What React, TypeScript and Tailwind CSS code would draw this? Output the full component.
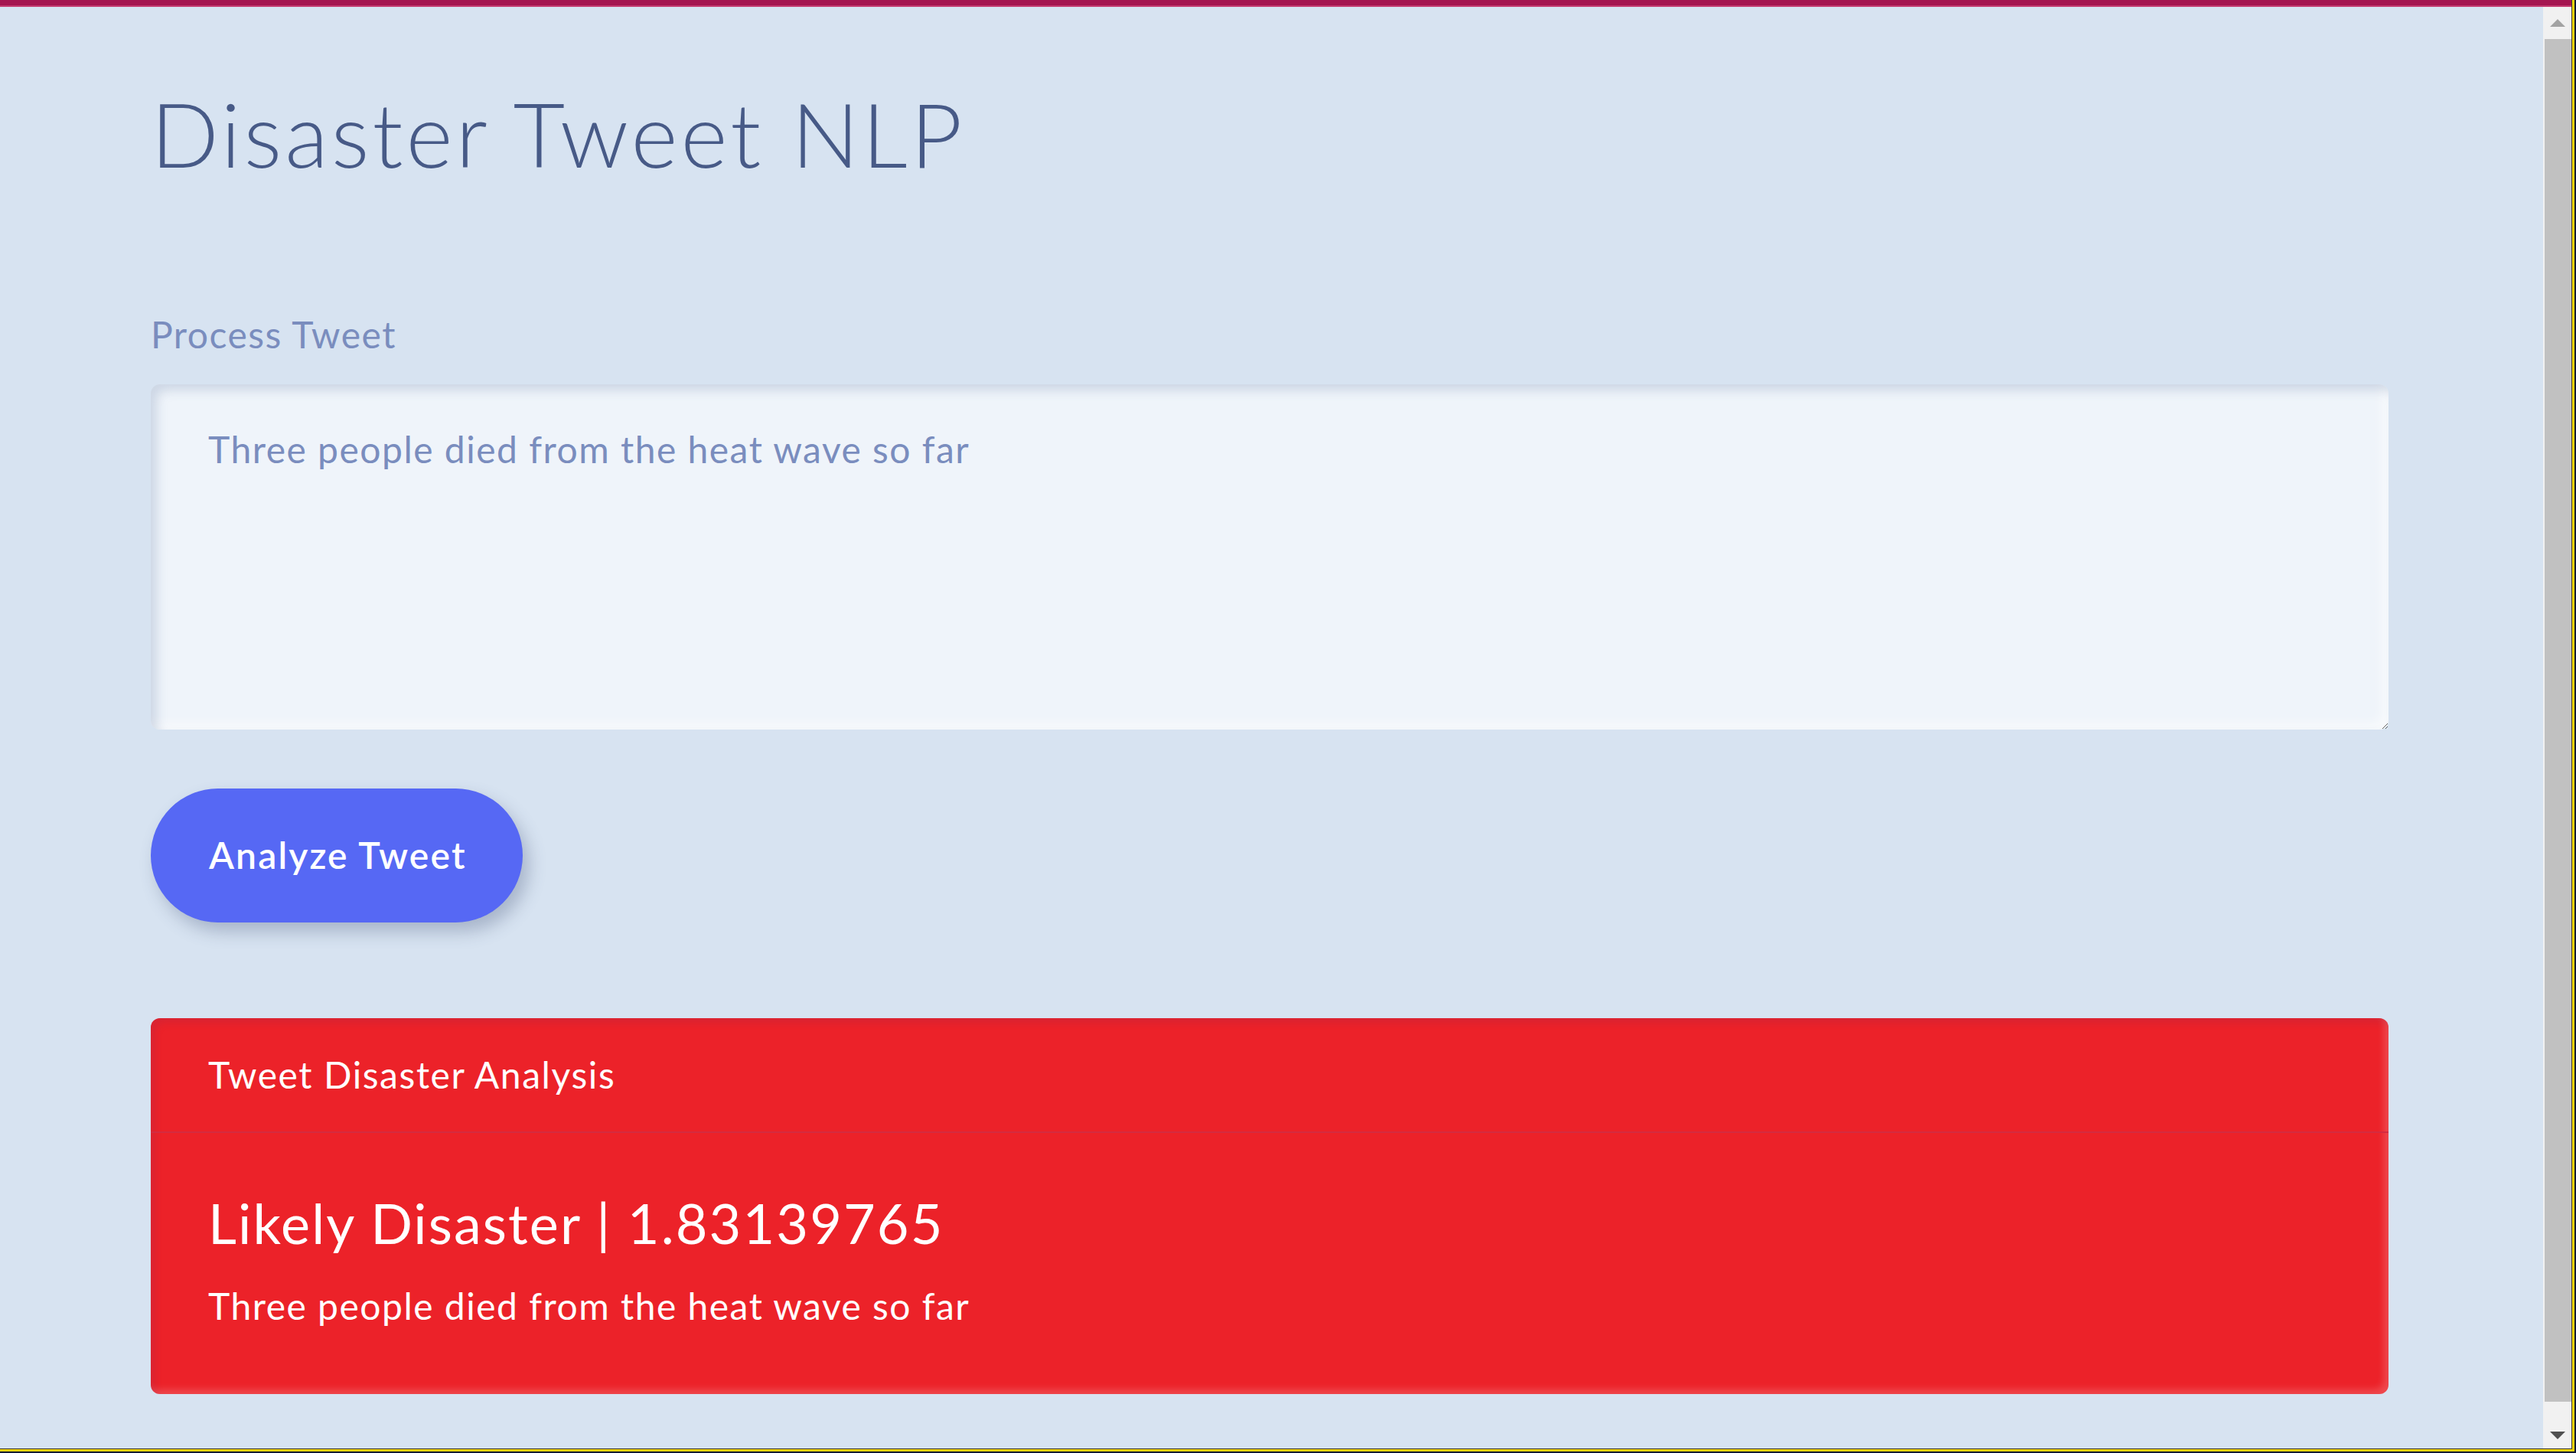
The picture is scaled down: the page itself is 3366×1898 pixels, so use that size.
import React from 'react';

const tweet = 'Three people died from the heat wave so far';

const ScrollTrack: React.FC = () => {
  return (
    <div className="w-[37px] h-full bg-[#f1f1f1] flex flex-col">
      <div className="h-[42px] flex items-center justify-center">
        <svg width="20" height="10" viewBox="0 0 20 10">
          <polygon points="10,0 20,10 0,10" fill="#a3a3a3" />
        </svg>
      </div>
      <div className="h-[1780px] ml-[2px] bg-[#c1c1c1]" />
      <div className="flex-1 flex items-end justify-center pb-[12px]">
        <svg width="20" height="10" viewBox="0 0 20 10">
          <polygon points="0,0 20,0 10,10" fill="#505050" />
        </svg>
      </div>
    </div>
  );
};

export default function App() {
  return (
    <div className="w-[3366px] h-[1898px] bg-[#101c30] font-['Lato','Noto_Sans',sans-serif]">
      <div className="w-[3364px] h-[1896px] border-r-[3px] border-b-[3px] border-[#f5d30c]">
        <div className="w-[3361px] h-[1893px] border-r border-b border-[#3c3c3c] flex flex-col bg-[#d7e3f1]">
          {/* window top strip */}
          <div className="h-[7px] bg-[#a51550]" />
          <div className="h-[2px] bg-[#c53c71]" />

          <div className="flex-1 flex overflow-hidden">
            <main className="flex-1 pl-[197px] pr-[202px] pt-[95px]">
              <h1 className="text-[117px] leading-[1.2] font-light text-[#475a87] tracking-[0.034em]">
                Disaster Tweet NLP
              </h1>

              <label className="block mt-[164px] text-[48px] leading-[1.2] text-[#7a8dbe] tracking-[0.031em]">
                Process Tweet
              </label>

              <textarea
                className="block mt-[36px] w-full h-[451px] rounded-[12px] bg-[#eff4fa] pt-[49px] pl-[75px] pr-[73px] text-[48px] leading-[1.5] tracking-[0.031em] text-[#7a8dbe] outline-none shadow-[inset_8px_8px_14px_rgba(120,140,175,0.28),inset_-8px_-8px_14px_rgba(255,255,255,0.6)]"
                defaultValue={tweet}
              />

              <button className="mt-[77px] h-[175px] pl-[76px] pr-[73px] rounded-full bg-[#5668f4] text-white text-[48px] font-semibold tracking-[0.045em] shadow-[8px_12px_22px_rgba(70,85,120,0.33)]">
                Analyze Tweet
              </button>

              <section className="mt-[125px] rounded-[12px] bg-[#ec2229] text-white shadow-[inset_6px_6px_10px_rgba(150,40,80,0.22),inset_-6px_-6px_10px_rgba(255,255,255,0.18)]">
                <div className="h-[150px] px-[75px] flex items-center border-b-2 border-[#d42b40] text-[48px] leading-[1.2] tracking-[0.033em]">
                  Tweet Disaster Analysis
                </div>
                <div className="px-[75px] pt-[74px] pb-[86px]">
                  <h5 className="text-[72px] leading-[1.2] tracking-[0.029em]">Likely Disaster | 1.83139765</h5>
                  <p className="mt-[37px] text-[48px] leading-[1.2] tracking-[0.031em]">{tweet}</p>
                </div>
              </section>
            </main>
            <ScrollTrack />
          </div>
        </div>
      </div>
    </div>
  );
}
